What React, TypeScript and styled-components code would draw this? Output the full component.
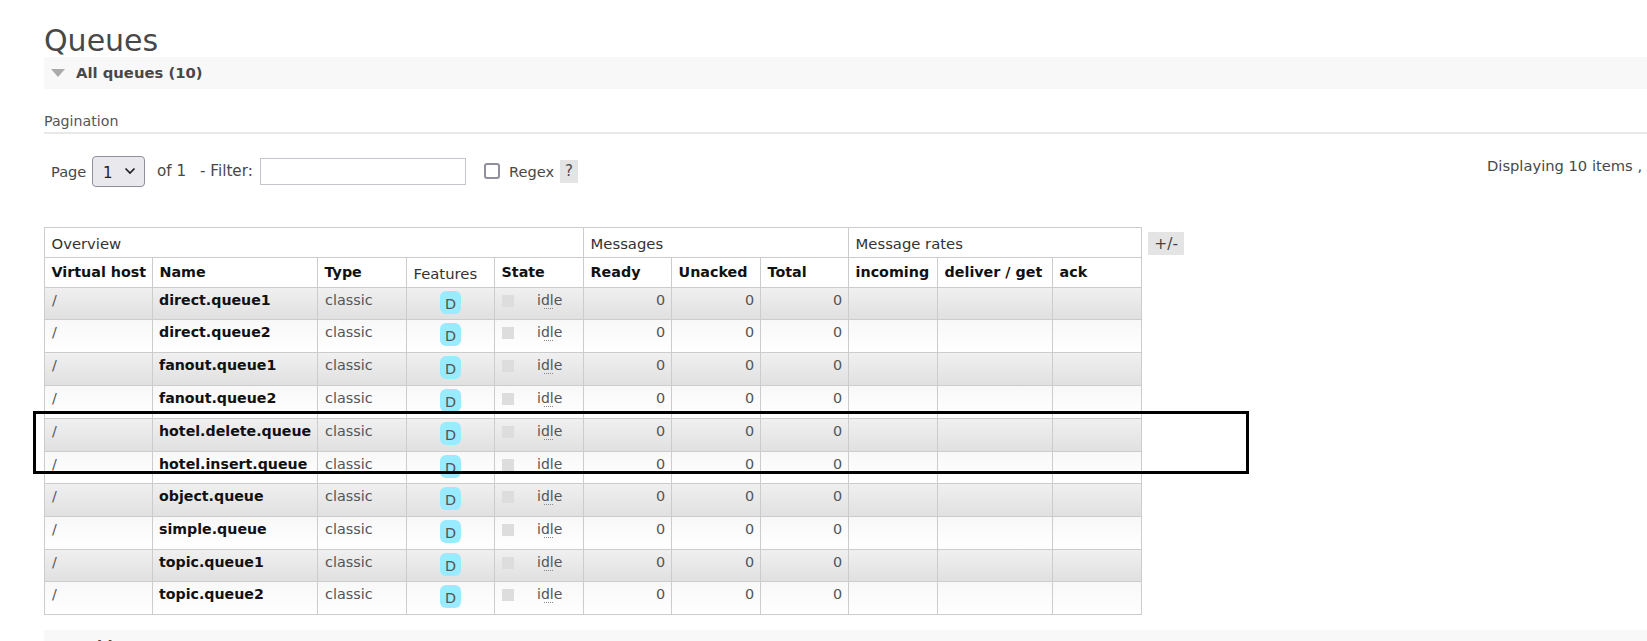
import React from "react";
import styled, { createGlobalStyle } from "styled-components";

const Global = createGlobalStyle`
  html, body { margin: 0; padding: 0; background: #fff; overflow: hidden; }
  body { font-family: "DejaVu Sans", Verdana, sans-serif; font-size: 14.4px; color: #484848; }
`;

const Page = styled.div`
  position: relative;
  width: 1647px;
  height: 641px;
  overflow: hidden;
  padding: 25px 0 0 44px;
  box-sizing: border-box;
`;
const Title = styled.h1`
  margin: 0;
  height: 32px;
  font-size: 30px;
  line-height: 32px;
  font-weight: 400;
  color: #484848;
`;
const SectionBar = styled.div`
  display: flex;
  align-items: center;
  height: 32px;
  background: #f8f8f8;
  font-weight: 700;
  font-size: 14.8px;
  color: #484848;
`;
const SectionLabel = styled.span`
  margin-bottom: 2px;
`;
const Triangle = styled.span`
  width: 0;
  height: 0;
  margin: 0 11px 0 7px;
  border-left: 7px solid transparent;
  border-right: 7px solid transparent;
  border-top: 8px solid #aaa;
`;
const PaginationHead = styled.div`
  margin-top: 21px;
  height: 22px;
  line-height: 22px;
  font-size: 14.2px;
  color: #555;
  border-bottom: 2px solid #e8e8e8;
`;
const PagerRow = styled.div`
  display: flex;
  align-items: center;
  height: 32px;
  margin-top: 21px;
  white-space: nowrap;
  overflow: hidden;
  color: #484848;
  font-size: 14.6px;
  padding-left: 7px;
  & > * {
    flex-shrink: 0;
  }
`;
const PageLabel = styled.span`
  width: 36px;
`;
const SelectBox = styled.div`
  display: flex;
  align-items: center;
  justify-content: space-between;
  box-sizing: border-box;
  width: 53px;
  height: 31px;
  margin-left: 5px;
  padding: 0 8px 0 10px;
  background: #e9e9ed;
  border: 1px solid #8f8f9d;
  border-radius: 4px;
  color: #222;
  font-size: 15px;
`;
const SelectValue = styled.span`
  margin-top: 3px;
`;
const OfLabel = styled.span`
  margin: 0 0 1px 12px;
  width: 30px;
  font-size: 15.2px;
`;
const FilterLabel = styled.span`
  margin: 0 0 1px 13px;
  width: 54px;
  font-size: 15.2px;
`;
const FilterInput = styled.div`
  box-sizing: border-box;
  width: 206px;
  height: 27px;
  margin-left: 6px;
  background: #fff;
  border: 1px solid #c4c4cc;
`;
const Check = styled.span`
  box-sizing: border-box;
  width: 16px;
  height: 16px;
  margin-left: 18px;
  background: #fff;
  border: 2px solid #8f8f9d;
  border-radius: 3px;
`;
const RegexLabel = styled.span`
  margin-left: 9px;
  width: 46px;
`;
const Help = styled.span`
  width: 18px;
  height: 23px;
  margin-left: 5px;
  line-height: 23px;
  text-align: center;
  font-size: 15px;
  background: #e4e4e4;
`;
const Displaying = styled.span`
  margin-left: 909px;
  position: relative;
  top: -6px;
  font-size: 14.7px;
`;
const TableRow = styled.div`
  display: flex;
  align-items: flex-start;
  margin-top: 40px;
`;
const Table = styled.table`
  border-collapse: collapse;
  table-layout: fixed;
  width: 1098px;
  font-size: 14.4px;
`;
const HeadCell = styled.th<{ $plain?: boolean }>`
  box-sizing: border-box;
  height: 30px;
  padding: ${(p) => (p.$plain ? "1px 0 0 6.5px" : "0 0 1px 6.5px")};
  border: 1px solid #ccc;
  text-align: left;
  white-space: nowrap;
  color: ${(p) => (p.$plain ? "#333" : "#111")};
  font-size: ${(p) => (p.$plain ? "14.8px" : "14.3px")};
  font-weight: ${(p) => (p.$plain ? 400 : 700)};
`;
const Body = styled.tr<{ $alt: boolean; $h: number }>`
  height: ${(p) => p.$h}px;
  background: ${(p) =>
    p.$alt
      ? "linear-gradient(#f0f0f0, #e0e0e0)"
      : "linear-gradient(#f8f8f8, #ffffff)"};
`;
const Cell = styled.td<{ $right?: boolean; $badge?: boolean; $strong?: boolean }>`
  box-sizing: border-box;
  height: inherit;
  padding: ${(p) => (p.$badge ? "3px 6px 0" : p.$strong ? "4px 0 0 6px" : "4px 6px 0 7px")};
  vertical-align: top;
  line-height: 17px;
  border: 1px solid #ccc;
  white-space: nowrap;
  overflow: visible;
  color: ${(p) => (p.$strong ? "#111" : "#555")};
  font-size: ${(p) => (p.$strong ? "14.2px" : "14.4px")};
  font-weight: ${(p) => (p.$strong ? 700 : 400)};
  text-align: ${(p) => (p.$right ? "right" : "left")};
`;
const Badge = styled.span`
  display: block;
  width: 21px;
  height: 23px;
  margin: 0 auto;
  line-height: 26px;
  border-radius: 6px;
  background: #99ebff;
  color: #555;
  text-align: center;
`;
const StateWrap = styled.div`
  display: flex;
  align-items: center;
`;
const StateDot = styled.span`
  width: 12px;
  height: 12px;
  background: #ddd;
`;
const StateLabel = styled.span`
  position: relative;
  margin-left: 23px;
  font-size: 14px;
  &::after {
    content: "";
    position: absolute;
    left: 7px;
    bottom: 0;
    width: 9px;
    border-bottom: 1px dotted #888;
  }
`;
const ToggleColumns = styled.span`
  display: inline-block;
  width: 36px;
  height: 23px;
  margin: 5px 0 0 6px;
  line-height: 25px;
  text-align: center;
  font-size: 15.5px;
  background: #e4e4e4;
  color: #444;
`;
const BottomBar = styled.div`
  margin-top: 15px;
  height: 32px;
  padding-left: 36px;
  background: #f8f8f8;
  font-weight: 700;
  font-size: 14.8px;
  color: #484848;
  line-height: 32px;
`;
const Highlight = styled.div`
  position: absolute;
  left: 33px;
  top: 411px;
  width: 1216px;
  height: 63px;
  box-sizing: border-box;
  border: 3px solid #000;
  pointer-events: none;
`;

const queues = [
  { name: "direct.queue1", h: 32 },
  { name: "direct.queue2", h: 33 },
  { name: "fanout.queue1", h: 33 },
  { name: "fanout.queue2", h: 33 },
  { name: "hotel.delete.queue", h: 33 },
  { name: "hotel.insert.queue", h: 32 },
  { name: "object.queue", h: 33 },
  { name: "simple.queue", h: 33 },
  { name: "topic.queue1", h: 32 },
  { name: "topic.queue2", h: 33 },
];

const widths = [108, 165, 89, 88, 89, 88, 89, 88, 89, 115, 89];

export default function App() {
  return (
    <Page>
      <Global />
      <Title>Queues</Title>
      <SectionBar>
        <Triangle />
        <SectionLabel>All queues (10)</SectionLabel>
      </SectionBar>
      <PaginationHead>Pagination</PaginationHead>
      <PagerRow>
        <PageLabel>Page</PageLabel>
        <SelectBox>
          <SelectValue>1</SelectValue>
          <svg width="12" height="8" viewBox="0 0 12 8" aria-hidden="true">
            <path d="M1.5 1.5 6 6l4.5-4.5" fill="none" stroke="#222" strokeWidth="1.7" />
          </svg>
        </SelectBox>
        <OfLabel>of 1</OfLabel>
        <FilterLabel>- Filter:</FilterLabel>
        <FilterInput />
        <Check />
        <RegexLabel>Regex</RegexLabel>
        <Help>?</Help>
        <Displaying>Displaying 10 items , page size up to:</Displaying>
      </PagerRow>
      <TableRow>
        <Table>
          <colgroup>
            {widths.map((w, i) => (
              <col key={i} style={{ width: w }} />
            ))}
          </colgroup>
          <thead>
            <tr>
              <HeadCell $plain colSpan={5}>Overview</HeadCell>
              <HeadCell $plain colSpan={3}>Messages</HeadCell>
              <HeadCell $plain colSpan={3}>Message rates</HeadCell>
            </tr>
            <tr>
              <HeadCell>Virtual host</HeadCell>
              <HeadCell>Name</HeadCell>
              <HeadCell>Type</HeadCell>
              <HeadCell $plain>Features</HeadCell>
              <HeadCell>State</HeadCell>
              <HeadCell>Ready</HeadCell>
              <HeadCell>Unacked</HeadCell>
              <HeadCell>Total</HeadCell>
              <HeadCell>incoming</HeadCell>
              <HeadCell>deliver / get</HeadCell>
              <HeadCell>ack</HeadCell>
            </tr>
          </thead>
          <tbody>
            {queues.map((q, i) => (
              <Body key={q.name} $alt={i % 2 === 0} $h={q.h}>
                <Cell>/</Cell>
                <Cell $strong>{q.name}</Cell>
                <Cell>classic</Cell>
                <Cell $badge>
                  <Badge>D</Badge>
                </Cell>
                <Cell>
                  <StateWrap>
                    <StateDot />
                    <StateLabel>idle</StateLabel>
                  </StateWrap>
                </Cell>
                <Cell $right>0</Cell>
                <Cell $right>0</Cell>
                <Cell $right>0</Cell>
                <Cell />
                <Cell />
                <Cell />
              </Body>
            ))}
          </tbody>
        </Table>
        <ToggleColumns>+/-</ToggleColumns>
      </TableRow>
      <BottomBar>Add a new queue</BottomBar>
      <Highlight />
    </Page>
  );
}
